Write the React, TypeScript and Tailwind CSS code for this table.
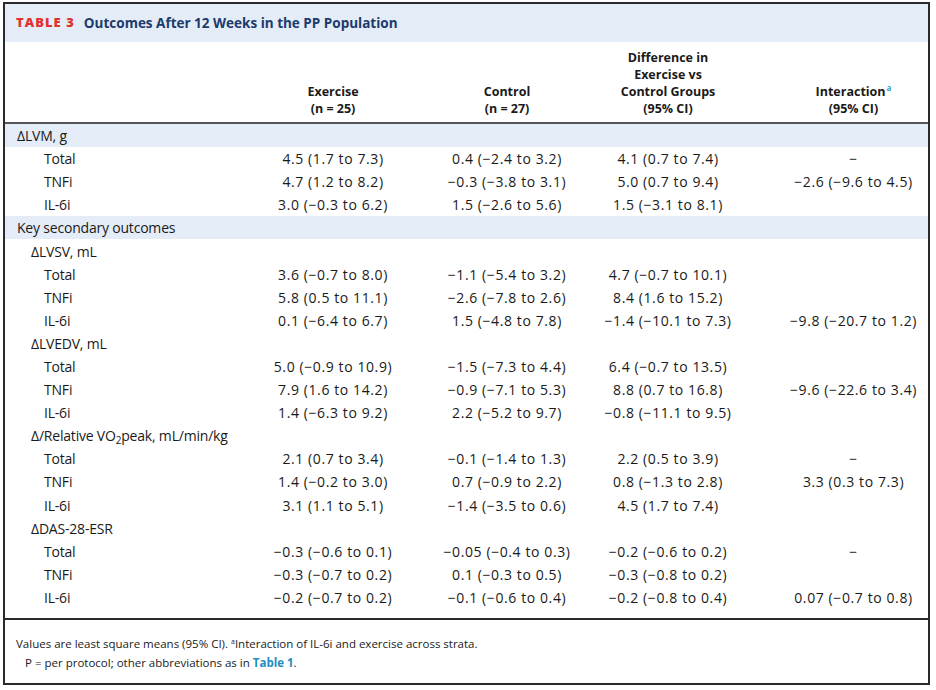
import React from 'react';

type Row = {
  label: React.ReactNode;
  level: 0 | 1 | 2;
  band?: boolean;
  values?: [string, string, string, string];
};

const m = '\u2212';

const rows: Row[] = [
  { label: '\u0394LVM, g', level: 0, band: true },
  { label: 'Total', level: 2, values: ['4.5 (1.7 to 7.3)', `0.4 (${m}2.4 to 3.2)`, '4.1 (0.7 to 7.4)', m] },
  { label: 'TNFi', level: 2, values: ['4.7 (1.2 to 8.2)', `${m}0.3 (${m}3.8 to 3.1)`, '5.0 (0.7 to 9.4)', `${m}2.6 (${m}9.6 to 4.5)`] },
  { label: 'IL-6i', level: 2, values: [`3.0 (${m}0.3 to 6.2)`, `1.5 (${m}2.6 to 5.6)`, `1.5 (${m}3.1 to 8.1)`, ''] },
  { label: 'Key secondary outcomes', level: 0, band: true },
  { label: '\u0394LVSV, mL', level: 1 },
  { label: 'Total', level: 2, values: [`3.6 (${m}0.7 to 8.0)`, `${m}1.1 (${m}5.4 to 3.2)`, `4.7 (${m}0.7 to 10.1)`, ''] },
  { label: 'TNFi', level: 2, values: ['5.8 (0.5 to 11.1)', `${m}2.6 (${m}7.8 to 2.6)`, '8.4 (1.6 to 15.2)', ''] },
  { label: 'IL-6i', level: 2, values: [`0.1 (${m}6.4 to 6.7)`, `1.5 (${m}4.8 to 7.8)`, `${m}1.4 (${m}10.1 to 7.3)`, `${m}9.8 (${m}20.7 to 1.2)`] },
  { label: '\u0394LVEDV, mL', level: 1 },
  { label: 'Total', level: 2, values: [`5.0 (${m}0.9 to 10.9)`, `${m}1.5 (${m}7.3 to 4.4)`, `6.4 (${m}0.7 to 13.5)`, ''] },
  { label: 'TNFi', level: 2, values: ['7.9 (1.6 to 14.2)', `${m}0.9 (${m}7.1 to 5.3)`, '8.8 (0.7 to 16.8)', `${m}9.6 (${m}22.6 to 3.4)`] },
  { label: 'IL-6i', level: 2, values: [`1.4 (${m}6.3 to 9.2)`, `2.2 (${m}5.2 to 9.7)`, `${m}0.8 (${m}11.1 to 9.5)`, ''] },
  {
    label: (
      <>
        {'\u0394/Relative VO'}
        <sub className="text-[10px] leading-none">2</sub>
        {'peak, mL/min/kg'}
      </>
    ),
    level: 1,
  },
  { label: 'Total', level: 2, values: ['2.1 (0.7 to 3.4)', `${m}0.1 (${m}1.4 to 1.3)`, '2.2 (0.5 to 3.9)', m] },
  { label: 'TNFi', level: 2, values: [`1.4 (${m}0.2 to 3.0)`, `0.7 (${m}0.9 to 2.2)`, `0.8 (${m}1.3 to 2.8)`, '3.3 (0.3 to 7.3)'] },
  { label: 'IL-6i', level: 2, values: ['3.1 (1.1 to 5.1)', `${m}1.4 (${m}3.5 to 0.6)`, '4.5 (1.7 to 7.4)', ''] },
  { label: '\u0394DAS-28-ESR', level: 1 },
  { label: 'Total', level: 2, values: [`${m}0.3 (${m}0.6 to 0.1)`, `${m}0.05 (${m}0.4 to 0.3)`, `${m}0.2 (${m}0.6 to 0.2)`, m] },
  { label: 'TNFi', level: 2, values: [`${m}0.3 (${m}0.7 to 0.2)`, `0.1 (${m}0.3 to 0.5)`, `${m}0.3 (${m}0.8 to 0.2)`, ''] },
  { label: 'IL-6i', level: 2, values: [`${m}0.2 (${m}0.7 to 0.2)`, `${m}0.1 (${m}0.6 to 0.4)`, `${m}0.2 (${m}0.8 to 0.4)`, `0.07 (${m}0.7 to 0.8)`] },
];

const indent = ['pl-[12px]', 'pl-[26px]', 'pl-[39px]'];
const grid = 'grid grid-cols-[241px_174px_174px_148px_1fr]';

function TableRow({ row }: { row: Row }) {
  return (
    <div className={`${grid} h-[23.1px] items-center ${row.band ? 'bg-[#e4ecf7]' : ''}`}>
      <div className={`${indent[row.level]} whitespace-nowrap tracking-[-0.2px]`}>{row.label}</div>
      {row.values ? (
        <>
          <div className="text-center tracking-[0.6px] whitespace-nowrap">{row.values[0]}</div>
          <div className="text-center tracking-[0.6px] whitespace-nowrap">{row.values[1]}</div>
          <div className="text-center tracking-[0.6px] whitespace-nowrap">{row.values[2]}</div>
          <div className="text-center tracking-[0.6px] whitespace-nowrap pl-[37px]">{row.values[3]}</div>
        </>
      ) : null}
    </div>
  );
}

export default function App() {
  return (
    <div className="w-[936px] h-[690px] bg-white pt-[2px] pl-[3px] text-[#1a1a1a] font-['Open_Sans',sans-serif]">
      <div className="w-[927px] h-[683px] border-2 border-[#2a2a2a] flex flex-col">
        <div className="h-[38px] bg-[#e4ecf7] flex items-center pl-[11px] gap-[9px] font-bold">
          <span className="text-[#e2322f] text-[13px] tracking-[0.08em] font-extrabold">TABLE 3</span>
          <span className="text-[#1c3a6c] text-[13.5px]">Outcomes After 12 Weeks in the PP Population</span>
        </div>

        <div className={`${grid} h-[82px] items-end pb-[5px] font-bold text-[12.5px] leading-[17px] text-center border-b-2 border-[#555]`}>
          <div />
          <div>
            Exercise
            <br />
            (n = 25)
          </div>
          <div>
            Control
            <br />
            (n = 27)
          </div>
          <div>
            Difference in
            <br />
            Exercise vs
            <br />
            Control Groups
            <br />
            (95% CI)
          </div>
          <div className="pl-[37px]">
            Interaction
            <span className="relative top-[-5px] text-[#3aa0c9] text-[8px] leading-none ml-[1px]">a</span>
            <br />
            (95% CI)
          </div>
        </div>

        <div className="text-[14px] pb-[9px] border-b-2 border-[#2a2a2a]">
          {rows.map((r, i) => (
            <TableRow key={i} row={r} />
          ))}
        </div>

        <div className="pl-[11px] pt-[14px] text-[11.5px] leading-[19px]">
          <div>
            Values are least square means (95% CI).{' '}
            <span className="relative top-[-4px] text-[7px] leading-none">a</span>Interaction of IL-6i and exercise
            across strata.
          </div>
          <div className="pl-[9px]">
            P = per protocol; other abbreviations as in{' '}
            <span className="text-[#1f8dc2] font-bold">Table 1</span>.
          </div>
        </div>
      </div>
    </div>
  );
}
